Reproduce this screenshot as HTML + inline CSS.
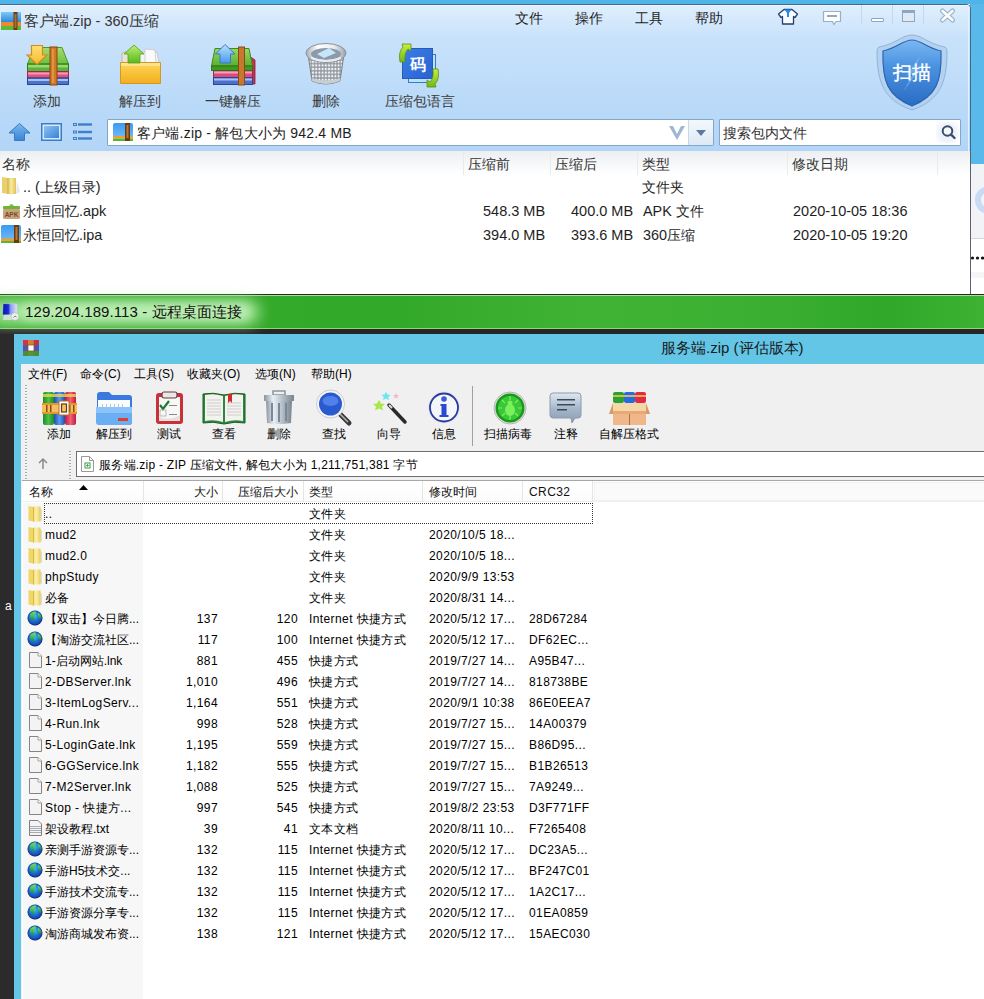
<!DOCTYPE html>
<html><head><meta charset="utf-8">
<style>
*{margin:0;padding:0;box-sizing:border-box}
html,body{width:984px;height:999px;overflow:hidden;background:#fff;font-family:"Liberation Sans",sans-serif;color:#000}
.a{position:absolute;white-space:nowrap}
svg{position:absolute;overflow:visible}
#top{position:absolute;left:0;top:0;width:984px;height:294px;background:#fff;overflow:hidden}
#w360{position:absolute;left:-1px;top:4px;width:972px;height:291px;border:1px solid #3d6b8e;border-bottom:none;border-top-right-radius:5px;background:#fff;overflow:hidden}
#w360bg{position:absolute;left:0;top:0;width:970px;height:147px;background:linear-gradient(#e0effd,#c9e2fb 22%,#bcdbf9 60%,#b2d5f7)}
.t14{font-size:14px;line-height:16px;color:#1e1e1e}
.lbl{font-size:14px;line-height:16px;color:#3a3a3a}
.sep{position:absolute;width:1px;background:#e6ebf0}
#rdp{position:absolute;left:0;top:294px;width:984px;height:40px;background:#262626}
#wr{position:absolute;left:0;top:334px;width:984px;height:665px;background:#2b2b2b}
.t12{font-size:12px;line-height:14px;color:#000}
.row{position:absolute;left:0;height:21px;width:984px}
.rl{position:absolute;white-space:nowrap;font-size:12px;line-height:14px;top:4px;letter-spacing:0.4px;color:#000}
.r{text-align:right}
</style></head><body>
<svg width="0" height="0" style="position:absolute"><defs><radialGradient id="gl" cx=".45" cy=".35" r=".75"><stop offset="0" stop-color="#3ac8f8"/><stop offset=".5" stop-color="#1a6ad0"/><stop offset="1" stop-color="#1a2a90"/></radialGradient><linearGradient id="gg" x1="0" y1="0" x2="0" y2="1"><stop offset="0" stop-color="#8af060"/><stop offset="1" stop-color="#1a8a30"/></linearGradient><linearGradient id="fw" x1="0" x2="1"><stop offset="0" stop-color="#f2dc74"/><stop offset=".45" stop-color="#fbefaa"/><stop offset="1" stop-color="#e8cc5c"/></linearGradient><radialGradient id="gs" cx=".5" cy=".5" r=".5"><stop offset=".75" stop-color="#000" stop-opacity="0"/><stop offset="1" stop-color="#001040" stop-opacity=".35"/></radialGradient></defs></svg>
<div id="top">
 <!-- desktop strip right -->
 <div class="a" style="left:970px;top:0;width:14px;height:164px;background:#58b9ea"></div>
 <div class="a" style="left:970px;top:164px;width:14px;height:74px;background:#f2f3f6"></div>
 <div class="a" style="left:970px;top:238px;width:14px;height:1px;background:#d6d6d6"></div>
 <div class="a" style="left:971px;top:272px;width:13px;height:6px;background:#f6f6f8"></div>
 <div class="a" style="left:975px;top:186px;width:28px;height:28px;border-radius:50%;border:6px solid #c8daf4"></div>
 <svg style="left:970px;top:255px" width="14" height="6" viewBox="0 0 14 6"><circle cx="2.5" cy="3" r="1.6" fill="#111"/><circle cx="7.5" cy="3" r="1.6" fill="#111"/><circle cx="12.5" cy="3" r="1.6" fill="#111"/></svg>
 <div class="a" style="left:0;top:0;width:984px;height:4px;background:#4fb5e8"></div>
 <div id="w360"><div id="w360bg"></div><div class="a" style="left:0;top:0;width:969px;height:1px;background:#eaf5fd"></div><div class="a" style="left:968px;top:0;width:1px;height:146px;background:#e4f2fc"></div></div>
 <div class="a" style="left:970px;top:151px;width:1px;height:143px;background:#5e6070"></div>
 <!-- title -->
 <svg style="left:1px;top:12px" width="20" height="18" viewBox="0 0 20 18">
  <defs><linearGradient id="tz" x1="0" y1="0" x2="0" y2="1"><stop offset="0" stop-color="#7ac8f4"/><stop offset="1" stop-color="#2a86dc"/></linearGradient></defs>
  <rect x="0" y="0" width="20" height="10.5" fill="url(#tz)"/><rect x="0" y="10" width="20" height="4" fill="#f08a2c"/><rect x="0" y="14" width="20" height="4" fill="#5ab83a"/>
  <rect x="12.5" y="0" width="4" height="18" fill="#6a3a14"/><rect x="13.5" y="2" width="2" height="14" fill="#a8702e"/>
 </svg>
 <div class="a t14" style="left:24px;top:13px;font-size:14.5px;color:#333">客户端.zip - 360压缩</div>
 <div class="a t14" style="left:515px;top:10px">文件</div>
 <div class="a t14" style="left:575px;top:10px">操作</div>
 <div class="a t14" style="left:635px;top:10px">工具</div>
 <div class="a t14" style="left:695px;top:10px">帮助</div>
 <div class="sep" style="left:861px;top:5px;height:19px;background:#c3d8ec"></div>
 <div class="sep" style="left:892px;top:5px;height:19px;background:#c3d8ec"></div>
 <div class="sep" style="left:923px;top:5px;height:19px;background:#c3d8ec"></div>

 <!-- title bar icons -->
 <svg style="left:777px;top:8px" width="22" height="17" viewBox="0 0 22 17">
  <path d="M7 1.5 L1.5 6 L4 9.5 L5.5 8.5 V16 H16.5 V8.5 L18 9.5 L20.5 6 L15 1.5Z" fill="#f8fbff" stroke="#23406e" stroke-width="1.3" stroke-linejoin="round"/>
  <path d="M7.5 1.5 H14.5 L12 5 V9 H10 V5Z" fill="#2a8ae8"/>
 </svg>
 <svg style="left:822px;top:10px" width="20" height="16" viewBox="0 0 20 16">
  <path d="M1.5 1.5 H18.5 V11.5 H14 L12 14.5 L10.5 11.5 H1.5Z" fill="#fbfdff" stroke="#9ab0c6" stroke-width="1.2"/>
  <rect x="5" y="5" width="10" height="2" fill="#9aa8b6"/>
 </svg>
 <div class="a" style="left:871px;top:18px;width:13px;height:4px;background:#fbfdff;border:1px solid #8ea6bf;border-radius:1px"></div>
 <div class="a" style="left:902px;top:10px;width:13px;height:12px;border:1px solid #8ea6bf;border-top:3px solid #8ea6bf;background:#dde9f5"></div>
 <svg style="left:940px;top:9px" width="15" height="13" viewBox="0 0 15 13">
  <path d="M2.5 2 L12.5 11 M12.5 2 L2.5 11" stroke="#9cb0c4" stroke-width="5" stroke-linecap="round"/>
  <path d="M2.5 2 L12.5 11 M12.5 2 L2.5 11" stroke="#fafcfe" stroke-width="2.6" stroke-linecap="round"/>
 </svg>
 <!-- toolbar 360 -->
 <svg style="left:26px;top:44px" width="44" height="42" viewBox="0 0 44 42">
  <defs><linearGradient id="ag" x1="0" y1="0" x2="0" y2="1"><stop offset="0" stop-color="#a6dc70"/><stop offset="1" stop-color="#6cc040"/></linearGradient>
  <linearGradient id="ay" x1="0" y1="0" x2="0" y2="1"><stop offset="0" stop-color="#ffe070"/><stop offset="1" stop-color="#f8b830"/></linearGradient></defs>
  <path d="M8 3.5 H36 L42.5 20 H1.5Z" fill="url(#ag)" stroke="#4a9a26" stroke-width="1"/>
  <rect x="1.5" y="20" width="41" height="7.5" fill="#5ab43a" stroke="#2f7a1e" stroke-width="1"/>
  <rect x="2" y="21" width="40" height="2.5" fill="#9ad870"/>
  <rect x="1.5" y="27.5" width="41" height="6.5" fill="#e2507e" stroke="#9a2a4a" stroke-width="1"/>
  <rect x="2" y="28.5" width="40" height="2" fill="#f49ab4"/>
  <rect x="1.5" y="34" width="41" height="6.5" fill="#4a74cc" stroke="#23459a" stroke-width="1"/>
  <rect x="2" y="35" width="40" height="2" fill="#a8c0f0"/>
  <rect x="24" y="3" width="7" height="38" fill="#cf7a24" stroke="#8a4510" stroke-width="1"/>
  <rect x="26" y="5" width="2" height="34" fill="#e8a050" opacity=".7"/>
  <path d="M5.5 1.5 H16.5 V11 H21 L11 20.5 L1 11 H5.5Z" fill="url(#ay)" stroke="#d88a18" stroke-width="1.2"/>
 </svg>
 <div class="a lbl" style="left:33px;top:93px">添加</div>
 <svg style="left:119px;top:44px" width="44" height="41" viewBox="0 0 44 41">
  <defs><linearGradient id="fo" x1="0" y1="0" x2="0" y2="1"><stop offset="0" stop-color="#ffd65a"/><stop offset=".5" stop-color="#f8c238"/><stop offset="1" stop-color="#f4ae22"/></linearGradient>
  <linearGradient id="gr" x1="0" y1="0" x2="0" y2="1"><stop offset="0" stop-color="#b8f070"/><stop offset="1" stop-color="#5ab820"/></linearGradient></defs>
  <path d="M3 9 L13 6 L14 19 L3 19Z" fill="#e8e4d8" stroke="#b8b0a0" stroke-width=".8"/>
  <path d="M14 8 H38 L40 19 H14Z" fill="#f2f4f6" stroke="#c0c0c0" stroke-width=".8"/>
  <path d="M26 5 L36 6 L37 19 L26 19Z" fill="#fafafa" stroke="#c8c8c8" stroke-width=".8"/>
  <path d="M1.5 18.5 H41.5 V39.5 H1.5Z" fill="url(#fo)" stroke="#d09a28" stroke-width="1"/>
  <path d="M2 19 H41 V22 H2Z" fill="#ffe48a"/>
  <path d="M15 1 L25 10 H21 V19 H9 V10 H5Z" fill="url(#gr)" stroke="#58a018" stroke-width=".8"/>
 </svg>
 <div class="a lbl" style="left:119px;top:93px">解压到</div>
 <svg style="left:211px;top:44px" width="45" height="41" viewBox="0 0 45 41">
  <defs><linearGradient id="gb" x1="0" y1="0" x2="0" y2="1"><stop offset="0" stop-color="#9ad860"/><stop offset="1" stop-color="#58b030"/></linearGradient>
  <linearGradient id="bl" x1="0" y1="0" x2="0" y2="1"><stop offset="0" stop-color="#b8e0ff"/><stop offset="1" stop-color="#4a9af0"/></linearGradient></defs>
  <path d="M38 12 L44 16 V40 H38Z" fill="#c83050" stroke="#8a1a34" stroke-width=".8"/>
  <rect x="2.5" y="26.5" width="39" height="7" fill="#e04a7a" stroke="#a0284a"/>
  <rect x="3" y="27.5" width="38" height="2" fill="#f4a0bc"/>
  <rect x="2.5" y="33.5" width="39" height="7" fill="#4a70cc" stroke="#2a449a"/>
  <rect x="3" y="34.5" width="38" height="2" fill="#a8c0f0"/>
  <path d="M4 4.5 H38 L41.5 22 H0.5Z" fill="url(#gb)" stroke="#3d8a1e"/>
  <rect x="0.5" y="22" width="41" height="4.5" fill="#3f9a22" stroke="#2a6a14" stroke-width=".8"/>
  <rect x="27.5" y="3" width="6" height="38" fill="#c8782e" stroke="#8a4a14"/>
  <path d="M14 0.5 L24 10 H19.5 V19 H9 V10 H4.5Z" fill="url(#bl)" stroke="#3a7ac8" stroke-width="1"/>
 </svg>
 <div class="a lbl" style="left:205px;top:93px">一键解压</div>
 <svg style="left:305px;top:42px" width="42" height="44" viewBox="0 0 42 44">
  <defs><pattern id="mesh" width="3.2" height="3.6" patternUnits="userSpaceOnUse"><rect width="3.2" height="3.6" fill="#8e959c"/><rect x=".6" y=".7" width="2" height="2.2" fill="#f4f6f8"/></pattern>
  <linearGradient id="rim" x1="0" y1="0" x2="1" y2="0"><stop offset="0" stop-color="#a8b0b8"/><stop offset=".3" stop-color="#ffffff"/><stop offset=".7" stop-color="#e8ecf0"/><stop offset="1" stop-color="#9aa2aa"/></linearGradient></defs>
  <path d="M3 12 L7 39 Q21 45 35 39 L39 12Z" fill="url(#mesh)" stroke="#7a8088" stroke-width="1"/>
  <path d="M7 39 Q21 45 35 39 L35.5 36 Q21 41 6.5 36Z" fill="#c8ced4"/>
  <ellipse cx="21" cy="11" rx="20" ry="9.5" fill="url(#rim)" stroke="#8a9098" stroke-width="1"/>
  <ellipse cx="21" cy="12" rx="15" ry="6" fill="#8a9aa8"/>
  <path d="M12 12 L24 6 L31 11 L19 16Z" fill="#c8e4f8"/>
  <path d="M6 16 Q21 22 36 16" fill="none" stroke="#e8ecf0" stroke-width="2"/>
 </svg>
 <div class="a lbl" style="left:312px;top:93px">删除</div>
 <svg style="left:397px;top:42px" width="44" height="46" viewBox="0 0 44 46">
  <defs><linearGradient id="my" x1="0" y1="0" x2="0" y2="1"><stop offset="0" stop-color="#c8f040"/><stop offset="1" stop-color="#70b818"/></linearGradient>
  <linearGradient id="mb" x1="0" y1="0" x2="1" y2="1"><stop offset="0" stop-color="#3a7ee8"/><stop offset="1" stop-color="#2a62d0"/></linearGradient></defs>
  <rect x="11.5" y="12.5" width="27" height="28" fill="#b8e4fa" stroke="#3a78c8"/>
  <rect x="5.5" y="6.5" width="30" height="30" fill="url(#mb)" stroke="#2a5ab8"/>
  <text x="20.5" y="28" font-size="16" fill="#fff" text-anchor="middle" font-family="Liberation Sans,sans-serif" font-weight="bold">码</text>
  <path d="M3 20 Q1 10 6 5 L5 2 H14 V9 L11 7 Q7 11 8 20Z" fill="url(#my)" stroke="#5a9010" stroke-width=".8"/>
  <path d="M41 27 Q43 37 38 42 L39 45 H30 V38 L33 40 Q37 36 36 27Z" fill="url(#my)" stroke="#5a9010" stroke-width=".8"/>
 </svg>
 <div class="a lbl" style="left:385px;top:93px">压缩包语言</div>
 <!-- shield -->
 <svg style="left:870px;top:28px" width="84" height="90" viewBox="0 0 84 90">
  <defs><linearGradient id="shg" x1="0" y1="0" x2="0" y2="1"><stop offset="0" stop-color="#7ab8f2"/><stop offset=".4" stop-color="#4a92e0"/><stop offset="1" stop-color="#2a6cc4"/></linearGradient></defs>
  <path d="M42 7 C52 7 58 16 75 19 Q77 20 77 23 C77 55 70 72 42 82 C14 72 7 55 7 23 Q7 20 9 19 C26 16 32 7 42 7Z" fill="#b4d2f0" stroke="#8fb4dc" stroke-width="1"/>
  <path d="M42 12 C51 12 57 20 71 23 C72 54 66 68 42 78 C18 68 12 54 13 23 C27 20 33 12 42 12Z" fill="url(#shg)" stroke="#2b64b4" stroke-width="1.2"/>
  <path d="M50 28 L36 48 L44 44 L33 64 L52 38 L45 42Z" fill="#9ccaf4" opacity=".45"/>
  <text x="42" y="51" font-size="19" fill="#fff" stroke="#fff" stroke-width=".4" text-anchor="middle" font-family="Liberation Sans,sans-serif">扫描</text>
 </svg>
 <!-- address row -->
 <svg style="left:8px;top:123px" width="23" height="18" viewBox="0 0 23 18">
  <defs><linearGradient id="ua" x1="0" y1="0" x2="0" y2="1"><stop offset="0" stop-color="#7ab8f0"/><stop offset="1" stop-color="#3a84d8"/></linearGradient></defs>
  <path d="M11.5 0.5 L22 10 H16.5 V17.5 H6.5 V10 H1Z" fill="url(#ua)" stroke="#3a78c0" stroke-width="1" stroke-linejoin="round"/>
 </svg>
 <svg style="left:41px;top:123px" width="21" height="18" viewBox="0 0 21 18">
  <defs><linearGradient id="vs" x1="0" y1="0" x2="1" y2="1"><stop offset="0" stop-color="#8cc4f4"/><stop offset="1" stop-color="#3a80d8"/></linearGradient></defs>
  <rect x=".75" y=".75" width="19.5" height="16.5" fill="#d8eafa" stroke="#3a7cc8" stroke-width="1.5"/>
  <rect x="3" y="3" width="15" height="12" fill="url(#vs)"/>
 </svg>
 <svg style="left:73px;top:123px" width="19" height="18" viewBox="0 0 19 18">
  <g fill="#3f7fc8"><rect x="0" y="0" width="4" height="3"/><rect x="0" y="7.5" width="4" height="3"/><rect x="0" y="14" width="4" height="3"/>
  <rect x="5" y="0.3" width="14" height="2.4"/><rect x="5" y="7.8" width="14" height="2.4"/><rect x="5" y="14.3" width="14" height="2.4"/></g>
  <g fill="#a8d0f4"><rect x="1" y="1" width="2" height="1"/><rect x="1" y="8.5" width="2" height="1"/><rect x="1" y="15" width="2" height="1"/></g>
 </svg>
 <div class="a" style="left:107px;top:119px;width:607px;height:27px;background:#fff;border:1px solid #86a6c6;border-radius:1px"></div>
 <div class="a" style="left:688px;top:120px;width:25px;height:25px;background:linear-gradient(#f4f8fc,#dde9f5);border-left:1px solid #c8d8ea"></div>
 <svg style="left:695px;top:129px" width="12" height="8" viewBox="0 0 12 8"><path d="M1 1 H11 L6 7Z" fill="#5a7aa0"/></svg>
 <svg style="left:668px;top:125px" width="18" height="16" viewBox="0 0 18 16"><path d="M1 1 L9 15 L17 1 H13 L9 9 L5 1Z" fill="#9cb8d4"/></svg>
 <svg style="left:113px;top:123px" width="20" height="18" viewBox="0 0 20 18">
  <defs><linearGradient id="zb" x1="0" y1="0" x2="0" y2="1"><stop offset="0" stop-color="#3a9af0"/><stop offset="1" stop-color="#6ab8f4"/></linearGradient></defs>
  <path d="M2 0 H18 Q20 0 20 2 V13 H0 V2 Q0 0 2 0Z" fill="url(#zb)"/>
  <rect x="0" y="13" width="20" height="2.5" fill="#f0a030"/><rect x="0" y="15.5" width="20" height="2.5" fill="#5ab43a"/>
  <rect x="12" y="0" width="5" height="18" fill="#6a3a14"/><rect x="13.5" y="2" width="2" height="13" fill="#b07a3a"/>
 </svg>
 <div class="a t14" style="left:137px;top:125px;letter-spacing:.2px">客户端.zip - 解包大小为 942.4 MB</div>
 <div class="a" style="left:719px;top:119px;width:242px;height:27px;background:#fff;border:1px solid #86a6c6;border-radius:1px"></div>
 <div class="a" style="left:936px;top:122px;width:23px;height:21px;background:radial-gradient(circle at 50% 50%,#eef3fa 50%,#fff 100%)"></div>
 <svg style="left:940px;top:124px" width="17" height="17" viewBox="0 0 17 17"><circle cx="7.5" cy="7" r="4.8" fill="#f4f7fb" stroke="#3b4c6c" stroke-width="2"/><path d="M11 10.5 L14.5 14" stroke="#3b4c6c" stroke-width="2.4" stroke-linecap="round"/></svg>
 <div class="a t14" style="left:723px;top:125px;color:#333">搜索包内文件</div>
 <!-- list header -->
 <div class="a" style="left:0;top:151px;width:970px;height:24px;background:linear-gradient(#eceef1,#f8f9fa 60%,#fff)"></div>
 <div class="sep" style="left:463px;top:152px;height:23px"></div>
 <div class="sep" style="left:550px;top:152px;height:23px"></div>
 <div class="sep" style="left:637px;top:152px;height:23px"></div>
 <div class="sep" style="left:787px;top:152px;height:23px"></div>
 <div class="sep" style="left:937px;top:152px;height:23px"></div>
 <div class="a t14" style="left:2px;top:156px;color:#333">名称</div>
 <div class="a t14" style="left:468px;top:156px;color:#333">压缩前</div>
 <div class="a t14" style="left:555px;top:156px;color:#333">压缩后</div>
 <div class="a t14" style="left:642px;top:156px;color:#333">类型</div>
 <div class="a t14" style="left:792px;top:156px;color:#333">修改日期</div>
 <!-- rows -->
 <svg style="left:1px;top:176px" width="19" height="19" viewBox="0 0 19 19">
  <defs><linearGradient id="fy" x1="0" x2="1"><stop offset="0" stop-color="#e6c860"/><stop offset=".5" stop-color="#f8e89a"/><stop offset="1" stop-color="#e2c25a"/></linearGradient></defs>
  <path d="M16 5 L19 16 L15 18Z" fill="#d8d8d0" opacity=".6"/>
  <path d="M1 1 L7 2 V18 L1 17Z" fill="#e8cf70"/>
  <path d="M6 2 H15 V18 H6Z" fill="url(#fy)"/>
  <path d="M7 2 V18" stroke="#caa848" stroke-width=".8"/>
 </svg>
 <div class="a t14" style="left:23px;top:179px;font-size:14.4px">.. (上级目录)</div>
 <div class="a t14" style="left:642px;top:179px;font-size:14.4px">文件夹</div>
 <svg style="left:3px;top:202px" width="17" height="17" viewBox="0 0 17 17">
  <path d="M6 4 Q8.5 0 11 4Z" fill="#7cc43a"/>
  <rect x="0" y="4" width="17" height="3.5" rx="1" fill="#6cb43a"/>
  <rect x="0" y="7" width="17" height="10" rx="1.5" fill="#c8a47a"/>
  <text x="8.5" y="15" font-size="6.5" fill="#7a4a2a" text-anchor="middle" font-family="Liberation Sans" font-weight="bold">APK</text>
 </svg>
 <div class="a t14" style="left:23px;top:203px;font-size:14.4px">永恒回忆.apk</div>
 <div class="a t14" style="left:483px;top:203px;font-size:14.5px">548.3 MB</div>
 <div class="a t14" style="left:571px;top:203px;font-size:14.5px">400.0 MB</div>
 <div class="a t14" style="left:643px;top:203px;font-size:14.4px">APK 文件</div>
 <div class="a t14" style="left:793px;top:203px;font-size:14.5px">2020-10-05 18:36</div>
 <svg style="left:1px;top:225px" width="20" height="18" viewBox="0 0 20 18">
  <defs><linearGradient id="ib" x1="0" y1="0" x2="0" y2="1"><stop offset="0" stop-color="#3a9af0"/><stop offset="1" stop-color="#6ab8f4"/></linearGradient></defs>
  <path d="M2 0 H18 Q20 0 20 2 V14 H0 V2 Q0 0 2 0Z" fill="url(#ib)"/>
  <rect x="0" y="13.5" width="20" height="2.5" fill="#f0a030"/><rect x="0" y="16" width="20" height="2" fill="#5ab43a"/>
  <rect x="13" y="0" width="5" height="18" fill="#6a3a14"/><rect x="14.5" y="2" width="2" height="13" fill="#b07a3a"/>
 </svg>
 <div class="a t14" style="left:23px;top:227px;font-size:14.4px">永恒回忆.ipa</div>
 <div class="a t14" style="left:483px;top:227px;font-size:14.5px">394.0 MB</div>
 <div class="a t14" style="left:571px;top:227px;font-size:14.5px">393.6 MB</div>
 <div class="a t14" style="left:643px;top:227px;font-size:14.4px">360压缩</div>
 <div class="a t14" style="left:793px;top:227px;font-size:14.5px">2020-10-05 19:20</div>
</div>
<div id="rdp">
 <div class="a" style="left:0;top:1px;width:984px;height:1px;background:#9ee58e"></div>
 <div class="a" style="left:0;top:2px;width:984px;height:32px;background:linear-gradient(90deg,#36ab2c 0,#33a929 40%,#40b334 60%,#3cb032 75%,#31a82a 90%,#3db233)"></div>
 <div class="a" style="left:0;top:34px;width:984px;height:1px;background:#8ad87a"></div>
<div class="a" style="left:-12px;top:5px;width:272px;height:26px;background:rgba(175,235,165,.85);border-radius:13px;filter:blur(7px)"></div>
 <div class="a" style="left:20px;top:9px;width:230px;height:18px;background:rgba(215,248,208,.55);border-radius:9px;filter:blur(5px)"></div>
 <svg style="left:1px;top:9px" width="20" height="20" viewBox="0 0 20 20">
  <defs><linearGradient id="rm" x1="0" x2="1"><stop offset="0" stop-color="#0a1aa8"/><stop offset=".4" stop-color="#1a2ad0"/><stop offset=".55" stop-color="#8898f0"/><stop offset="1" stop-color="#e0e4fa"/></linearGradient></defs>
  <path d="M3 12 H11 L12 17 H2Z" fill="#dfe8df" opacity=".8"/>
  <path d="M2 0.5 L16 1 V11.5 L1.5 12Z" fill="url(#rm)" stroke="#c8d0e8" stroke-width=".6"/>
  <circle cx="14" cy="13.5" r="3.8" fill="#eef2ee" stroke="#b0b8b0" stroke-width=".6"/>
  <path d="M12.5 14.5 L14 13 L15.5 14" stroke="#6a8a6a" stroke-width="1" fill="none"/>
 </svg>
 <div class="a" style="left:25px;top:9px;font-size:15px;line-height:17px;letter-spacing:0.1px;color:#111">129.204.189.113 - 远程桌面连接</div>
</div>
<div id="wr">
 <div class="a" style="left:5px;top:265px;font-size:12px;color:#fff">a</div>
 <div class="a" style="left:14px;top:0;width:970px;height:665px;background:#63c6e7"></div>
 <svg style="left:23px;top:6px" width="16" height="16" viewBox="0 0 16 16">
  <rect x="0" y="0" width="5.3" height="16" fill="#d8343a"/><rect x="5.3" y="0" width="5.4" height="16" fill="#e07a2a"/><rect x="10.7" y="0" width="5.3" height="16" fill="#c8303a"/>
  <rect x="0" y="5" width="16" height="6" fill="#3a5ac8" opacity=".85"/><rect x="0" y="11" width="16" height="5" fill="#3a9a3a" opacity=".85"/>
  <rect x="5" y="5" width="6" height="6" fill="#fff" stroke="#8a5a2a" stroke-width=".8"/>
 </svg>
 <div class="a" style="left:661px;top:5px;font-size:15px;line-height:18px;color:#1a1a1a">服务端.zip (评估版本)</div>
 <div class="a" style="left:21px;top:30px;width:963px;height:635px;background:#f0f0f0"></div>
 <div class="a t12" style="left:28px;top:33px">文件(F)</div>
 <div class="a t12" style="left:80px;top:33px">命令(C)</div>
 <div class="a t12" style="left:134px;top:33px">工具(S)</div>
 <div class="a t12" style="left:187px;top:33px">收藏夹(O)</div>
 <div class="a t12" style="left:255px;top:33px">选项(N)</div>
 <div class="a t12" style="left:311px;top:33px">帮助(H)</div>
 <div class="a" style="left:25px;top:51px;width:2px;height:95px;background:repeating-linear-gradient(#a8a8a8 0 1px,#fafafa 1px 2px,#f0f0f0 2px 3px)"></div>
 <div class="a" style="left:69px;top:117px;width:2px;height:29px;background:repeating-linear-gradient(#a8a8a8 0 1px,#fafafa 1px 2px,#f0f0f0 2px 3px)"></div>
 <div class="a" style="left:472px;top:52px;width:1px;height:60px;background:#a0a0a0"></div>

 <svg style="left:42px;top:57px" width="35" height="34" viewBox="0 0 35 34">
  <defs><linearGradient id="bg1" x1="0" x2="1"><stop offset="0" stop-color="#1f8a2a"/><stop offset=".5" stop-color="#4cc24a"/><stop offset="1" stop-color="#1f8a2a"/></linearGradient>
  <linearGradient id="bb1" x1="0" x2="1"><stop offset="0" stop-color="#1f4fb0"/><stop offset=".5" stop-color="#5a9af0"/><stop offset="1" stop-color="#1f4fb0"/></linearGradient>
  <linearGradient id="br1" x1="0" x2="1"><stop offset="0" stop-color="#c01a3a"/><stop offset=".5" stop-color="#f2607a"/><stop offset="1" stop-color="#c01a3a"/></linearGradient></defs>
  <rect x="1" y="1" width="11" height="33" rx="2" fill="url(#bg1)"/>
  <rect x="12" y="1" width="11" height="33" rx="2" fill="url(#bb1)"/>
  <rect x="23" y="1" width="11" height="33" rx="2" fill="url(#br1)"/>
  <rect x="1" y="3" width="33" height="3" fill="#e8d84a" opacity=".8"/>
  <rect x="0" y="12" width="35" height="11" fill="#e8962a"/>
  <rect x="0" y="14" width="35" height="7" fill="#f4c060"/>
  <g fill="#8a4a10"><rect x="4" y="14" width="1.5" height="7"/><rect x="8" y="14" width="1.5" height="7"/><rect x="27" y="14" width="1.5" height="7"/><rect x="31" y="14" width="1.5" height="7"/></g>
  <rect x="17" y="10" width="10" height="14" fill="#fff" stroke="#b07030" stroke-width="1"/>
  <rect x="19.5" y="13" width="5" height="8" fill="#f4c060" stroke="#6a3a10" stroke-width="1.2"/>
 </svg>
 <div class="a t12" style="left:47px;top:93px">添加</div>
 <svg style="left:95px;top:57px" width="38" height="35" viewBox="0 0 38 35">
  <path d="M2 4 Q2 1 5 1 H14 L17 4 H34 Q37 4 37 7 V31 Q37 34 34 34 H5 Q2 34 2 31Z" fill="#3a7ae0"/>
  <rect x="3" y="9" width="32" height="9" fill="#fafcff"/>
  <g fill="#b8c4d4"><rect x="7" y="13" width="1" height="5"/><rect x="11" y="13" width="1" height="5"/><rect x="15" y="13" width="1" height="5"/><rect x="19" y="13" width="1" height="5"/><rect x="23" y="13" width="1" height="5"/><rect x="27" y="13" width="1" height="5"/></g>
  <path d="M1 16 H37 V31 Q37 34 34 34 H4 Q1 34 1 31Z" fill="#6aaef4"/>
  <path d="M1 16 H37 V22 H1Z" fill="#8cc4fa"/>
  <rect x="23" y="27" width="10" height="3" fill="#e0402a"/>
 </svg>
 <div class="a t12" style="left:96px;top:93px">解压到</div>
 <svg style="left:155px;top:57px" width="29" height="34" viewBox="0 0 29 34">
  <rect x="1" y="2" width="27" height="31" rx="3" fill="#c8303a"/>
  <rect x="4" y="6" width="21" height="24" fill="#f8f8f6"/>
  <path d="M4 26 Q15 30 25 24 V30 H4Z" fill="#e6e0dc"/>
  <rect x="7" y="1" width="15" height="6" rx="2" fill="#e8e8e8" stroke="#6a3a3a" stroke-width="1.2"/>
  <path d="M5 14 L8 18 L14 10" stroke="#1f7a30" stroke-width="2.2" fill="none"/>
  <rect x="5" y="19" width="6" height="6" fill="none" stroke="#a8a8a8" stroke-width=".8"/>
  <g fill="#8a8a8a"><rect x="14" y="14" width="8" height="1"/><rect x="14" y="23" width="8" height="1"/></g>
 </svg>
 <div class="a t12" style="left:157px;top:93px">测试</div>
 <svg style="left:202px;top:58px" width="44" height="33" viewBox="0 0 44 33">
  <path d="M1 2 Q11 0 22 3 Q33 0 43 2 V31 Q33 29 22 32 Q11 29 1 31Z" fill="#2a8a3a" stroke="#1a5a20" stroke-width="1"/>
  <path d="M3 3 Q12 1 21 4 V30 Q12 27 3 29Z" fill="#f4f2f0"/>
  <path d="M23 4 Q32 1 41 3 V29 Q32 27 23 30Z" fill="#f4f2f0"/>
  <g stroke="#c8c4c0" stroke-width=".8"><path d="M5 8 H19 M5 11 H19 M5 14 H19 M5 17 H19 M5 20 H19 M5 23 H19 M25 11 H39 M25 14 H39 M25 17 H39 M25 20 H39 M25 23 H39"/></g>
  <path d="M26 2 V11 L28 9 L30 11 V2Z" fill="#d02a2a"/>
 </svg>
 <div class="a t12" style="left:212px;top:93px">查看</div>
 <svg style="left:263px;top:56px" width="32" height="35" viewBox="0 0 32 35">
  <defs><linearGradient id="tr" x1="0" x2="1"><stop offset="0" stop-color="#8a949e"/><stop offset=".3" stop-color="#e8eef4"/><stop offset=".6" stop-color="#b8c2cc"/><stop offset="1" stop-color="#7a848e"/></linearGradient></defs>
  <rect x="10" y="1" width="12" height="4" fill="none" stroke="#8a949e" stroke-width="1.5"/>
  <path d="M1 5 H31 V11 H1Z" fill="url(#tr)"/>
  <path d="M3 11 H29 L28 33 Q16 35 4 33Z" fill="url(#tr)"/>
  <g fill="#7a8898"><rect x="8" y="13" width="2" height="18"/><rect x="15" y="13" width="2" height="19"/><rect x="22" y="13" width="2" height="18"/></g>
 </svg>
 <div class="a t12" style="left:267px;top:93px">删除</div>
 <svg style="left:315px;top:56px" width="37" height="36" viewBox="0 0 37 36">
  <path d="M23 22 L34 33" stroke="#3a3a3a" stroke-width="5" stroke-linecap="round"/>
  <path d="M25 24 L33 32" stroke="#b8b8b8" stroke-width="1.5"/>
  <circle cx="15.5" cy="14" r="14" fill="#f4f6f8" stroke="#c8ccd0" stroke-width="1"/>
  <circle cx="15.5" cy="14" r="11.5" fill="#2a5ad0"/>
  <ellipse cx="15.5" cy="11" rx="8" ry="5" fill="#5a8af0" opacity=".8"/>
 </svg>
 <div class="a t12" style="left:322px;top:93px">查找</div>
 <svg style="left:372px;top:391px" width="36" height="34" viewBox="0 0 36 34" style="">
 </svg>
 <svg style="left:372px;top:57px" width="36" height="34" viewBox="0 0 36 34">
  <path d="M17 14 L33 31" stroke="#2a2a2a" stroke-width="3.5" stroke-linecap="round"/>
  <path d="M17 14 L20 17" stroke="#e0e0e0" stroke-width="2"/>
  <path d="M7 9 L9 12.5 L13 13 L10 15.5 L11 19.5 L7 17.5 L3 19.5 L4 15.5 L1 13 L5 12.5Z" fill="#a8e84a"/>
  <path d="M14 1 L15.5 3.5 L18.5 4 L16.3 6 L17 9 L14 7.6 L11 9 L11.7 6 L9.5 4 L12.5 3.5Z" fill="#6ae8f0"/>
  <path d="M24 2 L25 4 L27 4.3 L25.5 5.6 L26 7.5 L24 6.5 L22 7.5 L22.5 5.6 L21 4.3 L23 4Z" fill="#f8b8c8"/>
 </svg>
 <div class="a t12" style="left:377px;top:93px">向导</div>
 <svg style="left:427px;top:56px" width="34" height="35" viewBox="0 0 34 35">
  <circle cx="17" cy="17.5" r="16" fill="#dfe6f4"/>
  <circle cx="17" cy="17.5" r="14" fill="#f4f6fa" stroke="#2a3a9a" stroke-width="1.8"/>
  <circle cx="17" cy="9" r="2.8" fill="#3a5ad8"/>
  <path d="M13.5 14 H19.5 V25 H21.5 V27 H12.5 V25 H14.5 V16 H13.5Z" fill="#2a4ad0"/>
 </svg>
 <div class="a t12" style="left:432px;top:93px">信息</div>
 <svg style="left:493px;top:57px" width="34" height="34" viewBox="0 0 34 34">
  <circle cx="17" cy="17" r="16" fill="#e0e0e0" stroke="#a8a8a8" stroke-width=".8"/>
  <circle cx="17" cy="17" r="14.5" fill="#1a9a1a"/>
  <circle cx="17" cy="17" r="12" fill="#3ac83a"/>
  <g stroke="#7af05a" stroke-width="1.2" fill="none"><path d="M17 5 V9 M17 25 V29 M5 17 H9 M25 17 H29 M9 9 L12 12 M25 9 L22 12 M9 25 L12 22 M25 25 L22 22"/></g>
  <ellipse cx="17" cy="19" rx="5" ry="6" fill="#7af05a"/>
  <circle cx="17" cy="12" r="2.5" fill="#7af05a"/>
 </svg>
 <div class="a t12" style="left:484px;top:93px">扫描病毒</div>
 <svg style="left:549px;top:58px" width="33" height="32" viewBox="0 0 33 32">
  <defs><linearGradient id="nb" x1="0" y1="0" x2="0" y2="1"><stop offset="0" stop-color="#e0e8f0"/><stop offset=".5" stop-color="#a8b8cc"/><stop offset="1" stop-color="#8a9ab0"/></linearGradient></defs>
  <path d="M4 1 H29 Q32 1 32 4 V23 Q32 26 29 26 H26 L23 31 L22 26 H4 Q1 26 1 23 V4 Q1 1 4 1Z" fill="url(#nb)" stroke="#8a9ab0" stroke-width="1"/>
  <g fill="#3a4a5a"><rect x="8" y="7" width="18" height="1.5"/><rect x="8" y="12" width="18" height="1.5"/><rect x="8" y="17" width="10" height="1.5"/></g>
 </svg>
 <div class="a t12" style="left:554px;top:93px">注释</div>
 <svg style="left:608px;top:57px" width="43" height="34" viewBox="0 0 43 34">
  <rect x="5" y="1" width="11" height="11" rx="2" fill="#2aa03a"/><rect x="16" y="1" width="11" height="11" rx="2" fill="#2a6ae0"/><rect x="27" y="1" width="11" height="11" rx="2" fill="#e02a4a"/>
  <rect x="5" y="4" width="33" height="2" fill="#f0d040" opacity=".8"/>
  <path d="M5 12 H38 L42 23 H1Z" fill="#f4d8a8"/>
  <path d="M5 12 L1 23 H5Z M38 12 L42 23 H38Z" fill="#d89a68"/>
  <rect x="5" y="23" width="33" height="11" fill="#f0b888"/>
  <path d="M5 20 H38 V23 H5Z" fill="#e8a878"/>
  <rect x="21" y="23" width="1" height="11" fill="#b07040"/>
 </svg>
 <div class="a t12" style="left:599px;top:93px">自解压格式</div>
 <svg style="left:37px;top:124px" width="12" height="12" viewBox="0 0 12 12"><path d="M6 1 V11 M2 5 L6 1 L10 5" stroke="#8a8a8a" stroke-width="1.5" fill="none"/></svg>
 <div class="a" style="left:76px;top:117px;width:908px;height:26px;background:#fff;border:1px solid #6e6e6e;border-right:none"></div>
 <svg style="left:81px;top:122px" width="13" height="16" viewBox="0 0 13 16"><path d="M.5 .5 H8.5 L12.5 4.5 V15.5 H.5Z" fill="#fff" stroke="#9a9a9a"/><path d="M8.5 .5 V4.5 H12.5" fill="none" stroke="#9a9a9a"/><rect x="4" y="7" width="5" height="5" fill="none" stroke="#3aa040" stroke-width="1"/><path d="M6.5 8 V11 M5 9.5 H8" stroke="#3aa040" stroke-width=".8"/></svg>
 <div class="a t12" style="left:99px;top:124px;letter-spacing:0.25px">服务端.zip - ZIP 压缩文件, 解包大小为 1,211,751,381 字节</div>
 <div class="a" style="left:22px;top:146px;width:962px;height:519px;background:#fff;border-top:1px solid #a8a8a8"></div>
 <div class="a" style="left:23px;top:169px;width:120px;height:496px;background:#f7f7f7"></div>
 <div class="a" style="left:22px;top:147px;width:962px;height:21px;background:linear-gradient(#fff,#fcfcfc);border-bottom:1px solid #efefef"></div>
 <div class="a" style="left:594px;top:148px;width:390px;height:19px;background:#fafafa;border:1px solid #f1f1f1;border-right:none"></div>
 <div class="sep" style="left:143px;top:147px;height:21px;background:#e5e5e5"></div>
 <div class="sep" style="left:222px;top:147px;height:21px;background:#e5e5e5"></div>
 <div class="sep" style="left:303px;top:147px;height:21px;background:#e5e5e5"></div>
 <div class="sep" style="left:422px;top:147px;height:21px;background:#e5e5e5"></div>
 <div class="sep" style="left:522px;top:147px;height:21px;background:#e5e5e5"></div>
 <div class="sep" style="left:592px;top:147px;height:21px;background:#e5e5e5"></div>
 <div class="a t12" style="left:29px;top:151px;color:#111">名称</div>
 <svg style="left:79px;top:151px" width="9" height="5" viewBox="0 0 9 5"><path d="M0 5 L4.5 0 L9 5Z" fill="#000"/></svg>
 <div class="a t12" style="left:140px;top:151px;width:78px;text-align:right;color:#111">大小</div>
 <div class="a t12" style="left:220px;top:151px;width:78px;text-align:right;color:#111">压缩后大小</div>
 <div class="a t12" style="left:309px;top:151px;color:#111">类型</div>
 <div class="a t12" style="left:429px;top:151px;color:#111">修改时间</div>
 <div class="a t12" style="left:529px;top:151px;color:#111;letter-spacing:.4px">CRC32</div>
 <div class="a" style="left:44px;top:169px;width:549px;height:21px;border:1px dotted #333"></div>
<div class="row" style="top:169px"><svg style="left:28px;top:2px" width="14" height="17" viewBox="0 0 14 17"><path d="M12 3 L14 5 V16 L12 15Z" fill="#d8d0b0" opacity=".7"/><path d="M0.5 1 L5.5 2 V16.5 L0.5 15.5Z" fill="#f0d868"/><path d="M5 1.5 H12.5 V16.5 H5Z" fill="url(#fw)"/><path d="M5.5 2 V16.5" stroke="#d4b040" stroke-width=".8"/></svg><div class="rl" style="left:45px">..</div><div class="rl" style="left:309px">文件夹</div></div>
<div class="row" style="top:190px"><svg style="left:28px;top:2px" width="14" height="17" viewBox="0 0 14 17"><path d="M12 3 L14 5 V16 L12 15Z" fill="#d8d0b0" opacity=".7"/><path d="M0.5 1 L5.5 2 V16.5 L0.5 15.5Z" fill="#f0d868"/><path d="M5 1.5 H12.5 V16.5 H5Z" fill="url(#fw)"/><path d="M5.5 2 V16.5" stroke="#d4b040" stroke-width=".8"/></svg><div class="rl" style="left:45px">mud2</div><div class="rl" style="left:309px">文件夹</div><div class="rl" style="left:429px">2020/10/5 18...</div></div>
<div class="row" style="top:211px"><svg style="left:28px;top:2px" width="14" height="17" viewBox="0 0 14 17"><path d="M12 3 L14 5 V16 L12 15Z" fill="#d8d0b0" opacity=".7"/><path d="M0.5 1 L5.5 2 V16.5 L0.5 15.5Z" fill="#f0d868"/><path d="M5 1.5 H12.5 V16.5 H5Z" fill="url(#fw)"/><path d="M5.5 2 V16.5" stroke="#d4b040" stroke-width=".8"/></svg><div class="rl" style="left:45px">mud2.0</div><div class="rl" style="left:309px">文件夹</div><div class="rl" style="left:429px">2020/10/5 18...</div></div>
<div class="row" style="top:232px"><svg style="left:28px;top:2px" width="14" height="17" viewBox="0 0 14 17"><path d="M12 3 L14 5 V16 L12 15Z" fill="#d8d0b0" opacity=".7"/><path d="M0.5 1 L5.5 2 V16.5 L0.5 15.5Z" fill="#f0d868"/><path d="M5 1.5 H12.5 V16.5 H5Z" fill="url(#fw)"/><path d="M5.5 2 V16.5" stroke="#d4b040" stroke-width=".8"/></svg><div class="rl" style="left:45px">phpStudy</div><div class="rl" style="left:309px">文件夹</div><div class="rl" style="left:429px">2020/9/9 13:53</div></div>
<div class="row" style="top:253px"><svg style="left:28px;top:2px" width="14" height="17" viewBox="0 0 14 17"><path d="M12 3 L14 5 V16 L12 15Z" fill="#d8d0b0" opacity=".7"/><path d="M0.5 1 L5.5 2 V16.5 L0.5 15.5Z" fill="#f0d868"/><path d="M5 1.5 H12.5 V16.5 H5Z" fill="url(#fw)"/><path d="M5.5 2 V16.5" stroke="#d4b040" stroke-width=".8"/></svg><div class="rl" style="left:45px">必备</div><div class="rl" style="left:309px">文件夹</div><div class="rl" style="left:429px">2020/8/31 14...</div></div>
<div class="row" style="top:274px"><svg style="left:27px;top:2px" width="16" height="16" viewBox="0 0 16 16"><circle cx="8" cy="8" r="7.5" fill="url(#gl)"/><path d="M3 4 Q5 1.5 8.5 1 Q9.5 3 8 5 Q6.5 7.5 7.5 10 Q5.5 11 4 9 Q2.5 7 3 4Z" fill="url(#gg)" opacity=".85"/><path d="M11 2.5 Q14 4 14.8 8 Q13.5 9.5 12 8.5 Q10.5 5.5 11 2.5Z" fill="url(#gg)" opacity=".8"/><circle cx="8" cy="8" r="7.5" fill="url(#gs)"/></svg><div class="rl" style="left:45px;letter-spacing:0">【双击】今日腾...</div><div class="rl r" style="left:140px;width:78px">137</div><div class="rl r" style="left:220px;width:78px">120</div><div class="rl" style="left:309px">Internet 快捷方式</div><div class="rl" style="left:429px">2020/5/12 17...</div><div class="rl" style="left:529px">28D67284</div></div>
<div class="row" style="top:295px"><svg style="left:27px;top:2px" width="16" height="16" viewBox="0 0 16 16"><circle cx="8" cy="8" r="7.5" fill="url(#gl)"/><path d="M3 4 Q5 1.5 8.5 1 Q9.5 3 8 5 Q6.5 7.5 7.5 10 Q5.5 11 4 9 Q2.5 7 3 4Z" fill="url(#gg)" opacity=".85"/><path d="M11 2.5 Q14 4 14.8 8 Q13.5 9.5 12 8.5 Q10.5 5.5 11 2.5Z" fill="url(#gg)" opacity=".8"/><circle cx="8" cy="8" r="7.5" fill="url(#gs)"/></svg><div class="rl" style="left:45px;letter-spacing:0">【淘游交流社区...</div><div class="rl r" style="left:140px;width:78px">117</div><div class="rl r" style="left:220px;width:78px">100</div><div class="rl" style="left:309px">Internet 快捷方式</div><div class="rl" style="left:429px">2020/5/12 17...</div><div class="rl" style="left:529px">DF62EC...</div></div>
<div class="row" style="top:316px"><svg style="left:29px;top:2px" width="13" height="16" viewBox="0 0 13 16"><path d="M.5 .5 H9 L12.5 4 V15.5 H.5Z" fill="#f3f3f3" stroke="#858585"/><path d="M9 .5 V4 H12.5" fill="#fff" stroke="#a0a0a0"/></svg><div class="rl" style="left:45px;letter-spacing:0">1-启动网站.lnk</div><div class="rl r" style="left:140px;width:78px">881</div><div class="rl r" style="left:220px;width:78px">455</div><div class="rl" style="left:309px">快捷方式</div><div class="rl" style="left:429px">2019/7/27 14...</div><div class="rl" style="left:529px">A95B47...</div></div>
<div class="row" style="top:337px"><svg style="left:29px;top:2px" width="13" height="16" viewBox="0 0 13 16"><path d="M.5 .5 H9 L12.5 4 V15.5 H.5Z" fill="#f3f3f3" stroke="#858585"/><path d="M9 .5 V4 H12.5" fill="#fff" stroke="#a0a0a0"/></svg><div class="rl" style="left:45px">2-DBServer.lnk</div><div class="rl r" style="left:140px;width:78px">1,010</div><div class="rl r" style="left:220px;width:78px">496</div><div class="rl" style="left:309px">快捷方式</div><div class="rl" style="left:429px">2019/7/27 14...</div><div class="rl" style="left:529px">818738BE</div></div>
<div class="row" style="top:358px"><svg style="left:29px;top:2px" width="13" height="16" viewBox="0 0 13 16"><path d="M.5 .5 H9 L12.5 4 V15.5 H.5Z" fill="#f3f3f3" stroke="#858585"/><path d="M9 .5 V4 H12.5" fill="#fff" stroke="#a0a0a0"/></svg><div class="rl" style="left:45px">3-ItemLogServ...</div><div class="rl r" style="left:140px;width:78px">1,164</div><div class="rl r" style="left:220px;width:78px">551</div><div class="rl" style="left:309px">快捷方式</div><div class="rl" style="left:429px">2020/9/1 10:38</div><div class="rl" style="left:529px">86E0EEA7</div></div>
<div class="row" style="top:379px"><svg style="left:29px;top:2px" width="13" height="16" viewBox="0 0 13 16"><path d="M.5 .5 H9 L12.5 4 V15.5 H.5Z" fill="#f3f3f3" stroke="#858585"/><path d="M9 .5 V4 H12.5" fill="#fff" stroke="#a0a0a0"/></svg><div class="rl" style="left:45px">4-Run.lnk</div><div class="rl r" style="left:140px;width:78px">998</div><div class="rl r" style="left:220px;width:78px">528</div><div class="rl" style="left:309px">快捷方式</div><div class="rl" style="left:429px">2019/7/27 15...</div><div class="rl" style="left:529px">14A00379</div></div>
<div class="row" style="top:400px"><svg style="left:29px;top:2px" width="13" height="16" viewBox="0 0 13 16"><path d="M.5 .5 H9 L12.5 4 V15.5 H.5Z" fill="#f3f3f3" stroke="#858585"/><path d="M9 .5 V4 H12.5" fill="#fff" stroke="#a0a0a0"/></svg><div class="rl" style="left:45px">5-LoginGate.lnk</div><div class="rl r" style="left:140px;width:78px">1,195</div><div class="rl r" style="left:220px;width:78px">559</div><div class="rl" style="left:309px">快捷方式</div><div class="rl" style="left:429px">2019/7/27 15...</div><div class="rl" style="left:529px">B86D95...</div></div>
<div class="row" style="top:421px"><svg style="left:29px;top:2px" width="13" height="16" viewBox="0 0 13 16"><path d="M.5 .5 H9 L12.5 4 V15.5 H.5Z" fill="#f3f3f3" stroke="#858585"/><path d="M9 .5 V4 H12.5" fill="#fff" stroke="#a0a0a0"/></svg><div class="rl" style="left:45px">6-GGService.lnk</div><div class="rl r" style="left:140px;width:78px">1,182</div><div class="rl r" style="left:220px;width:78px">555</div><div class="rl" style="left:309px">快捷方式</div><div class="rl" style="left:429px">2019/7/27 15...</div><div class="rl" style="left:529px">B1B26513</div></div>
<div class="row" style="top:442px"><svg style="left:29px;top:2px" width="13" height="16" viewBox="0 0 13 16"><path d="M.5 .5 H9 L12.5 4 V15.5 H.5Z" fill="#f3f3f3" stroke="#858585"/><path d="M9 .5 V4 H12.5" fill="#fff" stroke="#a0a0a0"/></svg><div class="rl" style="left:45px">7-M2Server.lnk</div><div class="rl r" style="left:140px;width:78px">1,088</div><div class="rl r" style="left:220px;width:78px">525</div><div class="rl" style="left:309px">快捷方式</div><div class="rl" style="left:429px">2019/7/27 15...</div><div class="rl" style="left:529px">7A9249...</div></div>
<div class="row" style="top:463px"><svg style="left:29px;top:2px" width="13" height="16" viewBox="0 0 13 16"><path d="M.5 .5 H9 L12.5 4 V15.5 H.5Z" fill="#f3f3f3" stroke="#858585"/><path d="M9 .5 V4 H12.5" fill="#fff" stroke="#a0a0a0"/></svg><div class="rl" style="left:45px">Stop - 快捷方...</div><div class="rl r" style="left:140px;width:78px">997</div><div class="rl r" style="left:220px;width:78px">545</div><div class="rl" style="left:309px">快捷方式</div><div class="rl" style="left:429px">2019/8/2 23:53</div><div class="rl" style="left:529px">D3F771FF</div></div>
<div class="row" style="top:484px"><svg style="left:29px;top:2px" width="13" height="16" viewBox="0 0 13 16"><path d="M.5 .5 H9 L12.5 4 V15.5 H.5Z" fill="#f4f4f6" stroke="#808080"/><g stroke="#a8acb8" stroke-width="1"><path d="M1 6.5 H12 M1 8.5 H12 M1 10.5 H12 M1 12.5 H12"/></g></svg><div class="rl" style="left:45px;letter-spacing:0">架设教程.txt</div><div class="rl r" style="left:140px;width:78px">39</div><div class="rl r" style="left:220px;width:78px">41</div><div class="rl" style="left:309px">文本文档</div><div class="rl" style="left:429px">2020/8/11 10...</div><div class="rl" style="left:529px">F7265408</div></div>
<div class="row" style="top:505px"><svg style="left:27px;top:2px" width="16" height="16" viewBox="0 0 16 16"><circle cx="8" cy="8" r="7.5" fill="url(#gl)"/><path d="M3 4 Q5 1.5 8.5 1 Q9.5 3 8 5 Q6.5 7.5 7.5 10 Q5.5 11 4 9 Q2.5 7 3 4Z" fill="url(#gg)" opacity=".85"/><path d="M11 2.5 Q14 4 14.8 8 Q13.5 9.5 12 8.5 Q10.5 5.5 11 2.5Z" fill="url(#gg)" opacity=".8"/><circle cx="8" cy="8" r="7.5" fill="url(#gs)"/></svg><div class="rl" style="left:45px;letter-spacing:0">亲测手游资源专...</div><div class="rl r" style="left:140px;width:78px">132</div><div class="rl r" style="left:220px;width:78px">115</div><div class="rl" style="left:309px">Internet 快捷方式</div><div class="rl" style="left:429px">2020/5/12 17...</div><div class="rl" style="left:529px">DC23A5...</div></div>
<div class="row" style="top:526px"><svg style="left:27px;top:2px" width="16" height="16" viewBox="0 0 16 16"><circle cx="8" cy="8" r="7.5" fill="url(#gl)"/><path d="M3 4 Q5 1.5 8.5 1 Q9.5 3 8 5 Q6.5 7.5 7.5 10 Q5.5 11 4 9 Q2.5 7 3 4Z" fill="url(#gg)" opacity=".85"/><path d="M11 2.5 Q14 4 14.8 8 Q13.5 9.5 12 8.5 Q10.5 5.5 11 2.5Z" fill="url(#gg)" opacity=".8"/><circle cx="8" cy="8" r="7.5" fill="url(#gs)"/></svg><div class="rl" style="left:45px;letter-spacing:0">手游H5技术交...</div><div class="rl r" style="left:140px;width:78px">132</div><div class="rl r" style="left:220px;width:78px">115</div><div class="rl" style="left:309px">Internet 快捷方式</div><div class="rl" style="left:429px">2020/5/12 17...</div><div class="rl" style="left:529px">BF247C01</div></div>
<div class="row" style="top:547px"><svg style="left:27px;top:2px" width="16" height="16" viewBox="0 0 16 16"><circle cx="8" cy="8" r="7.5" fill="url(#gl)"/><path d="M3 4 Q5 1.5 8.5 1 Q9.5 3 8 5 Q6.5 7.5 7.5 10 Q5.5 11 4 9 Q2.5 7 3 4Z" fill="url(#gg)" opacity=".85"/><path d="M11 2.5 Q14 4 14.8 8 Q13.5 9.5 12 8.5 Q10.5 5.5 11 2.5Z" fill="url(#gg)" opacity=".8"/><circle cx="8" cy="8" r="7.5" fill="url(#gs)"/></svg><div class="rl" style="left:45px;letter-spacing:0">手游技术交流专...</div><div class="rl r" style="left:140px;width:78px">132</div><div class="rl r" style="left:220px;width:78px">115</div><div class="rl" style="left:309px">Internet 快捷方式</div><div class="rl" style="left:429px">2020/5/12 17...</div><div class="rl" style="left:529px">1A2C17...</div></div>
<div class="row" style="top:568px"><svg style="left:27px;top:2px" width="16" height="16" viewBox="0 0 16 16"><circle cx="8" cy="8" r="7.5" fill="url(#gl)"/><path d="M3 4 Q5 1.5 8.5 1 Q9.5 3 8 5 Q6.5 7.5 7.5 10 Q5.5 11 4 9 Q2.5 7 3 4Z" fill="url(#gg)" opacity=".85"/><path d="M11 2.5 Q14 4 14.8 8 Q13.5 9.5 12 8.5 Q10.5 5.5 11 2.5Z" fill="url(#gg)" opacity=".8"/><circle cx="8" cy="8" r="7.5" fill="url(#gs)"/></svg><div class="rl" style="left:45px;letter-spacing:0">手游资源分享专...</div><div class="rl r" style="left:140px;width:78px">132</div><div class="rl r" style="left:220px;width:78px">115</div><div class="rl" style="left:309px">Internet 快捷方式</div><div class="rl" style="left:429px">2020/5/12 17...</div><div class="rl" style="left:529px">01EA0859</div></div>
<div class="row" style="top:589px"><svg style="left:27px;top:2px" width="16" height="16" viewBox="0 0 16 16"><circle cx="8" cy="8" r="7.5" fill="url(#gl)"/><path d="M3 4 Q5 1.5 8.5 1 Q9.5 3 8 5 Q6.5 7.5 7.5 10 Q5.5 11 4 9 Q2.5 7 3 4Z" fill="url(#gg)" opacity=".85"/><path d="M11 2.5 Q14 4 14.8 8 Q13.5 9.5 12 8.5 Q10.5 5.5 11 2.5Z" fill="url(#gg)" opacity=".8"/><circle cx="8" cy="8" r="7.5" fill="url(#gs)"/></svg><div class="rl" style="left:45px;letter-spacing:0">淘游商城发布资...</div><div class="rl r" style="left:140px;width:78px">138</div><div class="rl r" style="left:220px;width:78px">121</div><div class="rl" style="left:309px">Internet 快捷方式</div><div class="rl" style="left:429px">2020/5/12 17...</div><div class="rl" style="left:529px">15AEC030</div></div>
</div>
</body></html>
